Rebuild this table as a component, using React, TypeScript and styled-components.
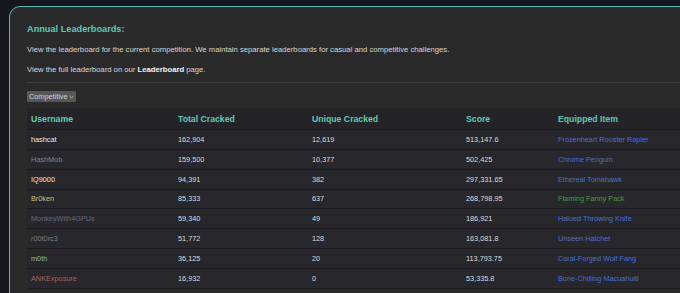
import React from 'react';
import styled, { createGlobalStyle } from 'styled-components';

const GlobalStyle = createGlobalStyle`
  html, body {
    margin: 0;
    padding: 0;
    background: #16161f;
    overflow: hidden;
  }
  body {
    font-family: "Liberation Sans", Arial, sans-serif;
  }
`;

const Page = styled.div`
  width: 680px;
  height: 293px;
  padding: 6px 0 0 9px;
  box-sizing: border-box;
  overflow: hidden;
`;

const Card = styled.section`
  width: 740px;
  height: 320px;
  box-sizing: border-box;
  background: #2a2a2a;
  border: 1.5px solid #58b7ae;
  border-radius: 11px;
  padding: 16px 0 0 17px;
`;

const Title = styled.h2`
  margin: 0;
  font-size: 9.2px;
  line-height: 12px;
  font-weight: 700;
  color: #5cc8b4;
`;

const Text = styled.p<{ $gap: number }>`
  margin: ${p => p.$gap}px 0 0;
  font-size: 7.7px;
  line-height: 12px;
  color: #d8d8d8;

  b {
    color: #f4f4f4;
  }
`;

const Divider = styled.hr`
  margin: 6px 0 0;
  border: none;
  height: 1px;
  background: #3d3d3d;
`;

const Select = styled.div`
  margin-top: 8px;
  display: inline-flex;
  align-items: center;
  gap: 1px;
  height: 11px;
  padding: 0 2px;
  background: #575757;
  border-radius: 1px;
  color: #d0d0d0;
  font-size: 7.3px;
  line-height: 11px;
`;

const Table = styled.div`
  margin-top: 5px;
  display: grid;
  grid-template-columns: 147px 134px 154px 92px 1fr;
`;

const HeadCell = styled.div`
  height: 22px;
  display: flex;
  align-items: center;
  padding-left: 4px;
  background: #242428;
  border-bottom: 1px solid #1c1c20;
  box-sizing: border-box;
  font-size: 8.7px;
  font-weight: 700;
  color: #62c9b4;
`;

const Cell = styled.div<{ $color?: string }>`
  height: 19.85px;
  display: flex;
  align-items: center;
  padding-left: 4px;
  background: #27272c;
  border-bottom: 1.5px solid #1d1d21;
  box-sizing: border-box;
  font-size: 7.3px;
  color: ${p => p.$color || '#dcdcdc'};
  white-space: nowrap;
`;

const BLUE = '#4a6fd6';

const rows = [
  { name: 'hashcat', color: '#e2ecf0', total: '162,904', unique: '12,619', score: '513,147.6', item: 'Frozenheart Rooster Rapier', itemColor: BLUE },
  { name: 'HashMob', color: '#858585', total: '159,500', unique: '10,377', score: '502,425', item: 'Chrome Penguin', itemColor: BLUE },
  { name: 'IQ9000', color: '#ecebcc', total: '94,391', unique: '382', score: '297,331.65', item: 'Ethereal Tomahawk', itemColor: BLUE },
  { name: 'Br0ken', color: '#d6bd78', total: '85,333', unique: '637', score: '268,798.95', item: 'Flaming Fanny Pack', itemColor: '#4f9a3e' },
  { name: 'MonkeyWith4GPUs', color: '#5e6a8c', total: '59,340', unique: '49', score: '186,921', item: 'Haloed Throwing Knife', itemColor: BLUE },
  { name: 'r00t0rc3', color: '#7c7c7c', total: '51,772', unique: '128', score: '163,081.8', item: 'Unseen Hatchet', itemColor: BLUE },
  { name: 'm0th', color: '#7fbdb0', total: '36,125', unique: '20', score: '113,793.75', item: 'Coral-Forged Wolf Fang', itemColor: BLUE },
  { name: 'ANKExposure', color: '#a2665b', total: '16,932', unique: '0', score: '53,335.8', item: 'Bone-Chilling Macuahuitl', itemColor: BLUE },
];

const App = () => {
  return (
    <Page>
      <GlobalStyle />
      <Card>
        <Title>Annual Leaderboards:</Title>
        <Text $gap={9}>
          View the leaderboard for the current competition. We maintain separate leaderboards for casual and competitive challenges.
        </Text>
        <Text $gap={8}>
          View the full leaderboard on our <b>Leaderboard</b> page.
        </Text>
        <Divider />
        <Select>
          Competitive
          <svg width="5" height="4" viewBox="0 0 5 4">
            <path d="M0.6 1 L2.5 2.8 L4.4 1" stroke="#cfcfcf" strokeWidth="0.7" fill="none" />
          </svg>
        </Select>
        <Table>
          <HeadCell>Username</HeadCell>
          <HeadCell>Total Cracked</HeadCell>
          <HeadCell>Unique Cracked</HeadCell>
          <HeadCell>Score</HeadCell>
          <HeadCell>Equipped Item</HeadCell>
          {rows.map(r => (
            <React.Fragment key={r.name}>
              <Cell $color={r.color}>{r.name}</Cell>
              <Cell>{r.total}</Cell>
              <Cell>{r.unique}</Cell>
              <Cell>{r.score}</Cell>
              <Cell $color={r.itemColor}>{r.item}</Cell>
            </React.Fragment>
          ))}
        </Table>
      </Card>
    </Page>
  );
};

export default App;
